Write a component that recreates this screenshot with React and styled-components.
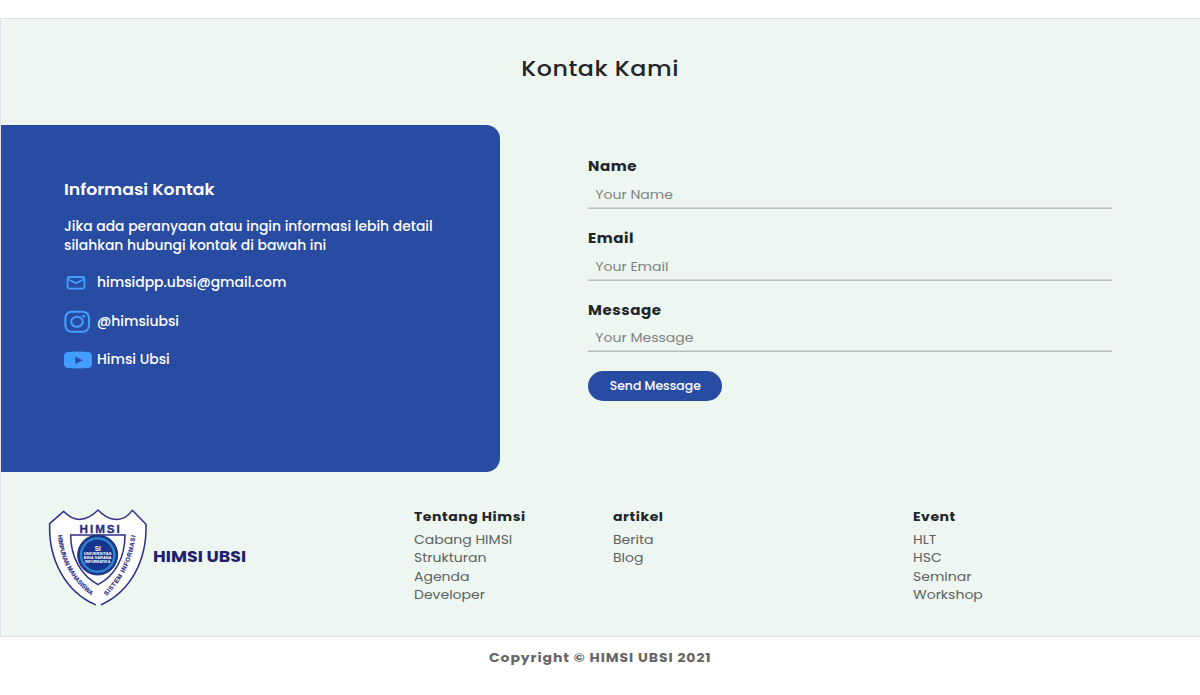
import React from "react";
import styled, { createGlobalStyle } from "styled-components";

const family = 'Poppins, Inter, "Liberation Sans", sans-serif';

const GlobalStyle = createGlobalStyle`
  * { box-sizing: border-box; }
  body {
    margin: 0;
    background: #fff;
    color: #212529;
    font-family: ${family};
    font-feature-settings: "cv11";
  }
`;

/* Widens the letters slightly, as all the copy on this page is set. */
const Wide = styled.span`
  display: inline-block;
  white-space: nowrap;
  transform: scaleX(${(p) => p.$by || 1.078});
  transform-origin: ${(p) => p.$from || "left"} center;
`;

const Page = styled.div`
  padding-top: 18px;
`;

const Section = styled.section`
  height: 619px;
  background: #edf6f1;
  border: 1px solid #dee2e6;
  border-right: 0;
`;

const Title = styled.h2`
  margin: 0 0 6px;
  font-size: 22px;
  font-weight: 500;
  letter-spacing: 0.5px;
  line-height: 100px;
  text-align: center;
`;

const Columns = styled.div`
  display: grid;
  grid-template-columns: 499px 524px;
  column-gap: 88px;
  height: 347px;
`;

const InfoCard = styled.div`
  padding: 53px 0 0 63px;
  border-radius: 0 14px 14px 0;
  background: #294ca3;
  color: #fff;
`;

const InfoTitle = styled.h3`
  margin: 0 0 16px;
  font-size: 16px;
  font-weight: 600;
  line-height: 24px;
`;

const InfoText = styled.p`
  display: flex;
  flex-direction: column;
  align-items: flex-start;
  margin: 0 0 9px;
  font-size: 13.5px;
  font-weight: 500;
  line-height: 18.5px;
`;

const ContactList = styled.ul`
  margin: 0;
  padding: 0;
  list-style: none;
`;

const Contact = styled.li`
  display: flex;
  align-items: center;
  gap: 5px;
  height: 38.6px;
  font-size: 13.5px;
  font-weight: 500;

  svg {
    flex: none;
  }
`;

const Form = styled.form`
  padding-top: 29.4px;
`;

const Field = styled.label`
  display: block;
  height: 71.6px;
`;

const Label = styled.span`
  display: block;
  font-size: 14px;
  font-weight: 700;
  letter-spacing: 0.5px;
  line-height: 24px;
`;

const InputLine = styled.span`
  display: block;
  height: 30.6px;
  border-bottom: 1px solid #bcbebd;
  box-shadow: inset 0 -1px #d3d8d5;
`;

const Input = styled.input`
  display: block;
  width: 486px;
  height: 33.6px;
  padding: 0 0 0 6.8px;
  border: 0;
  outline: 0;
  background: transparent;
  color: #212529;
  font: 400 13px ${family};
  font-feature-settings: "cv11";
  transform: scaleX(1.078);
  transform-origin: left;

  &::placeholder {
    color: #7d827f;
    opacity: 1;
  }
`;

const SendButton = styled.button`
  display: flex;
  align-items: center;
  justify-content: center;
  width: 134px;
  height: 30px;
  margin-top: 1.8px;
  padding: 1px 0 0;
  border: 0;
  border-radius: 17px;
  background: #294ca3;
  color: #fff;
  font: 500 11.5px ${family};
  font-feature-settings: "cv11";
`;

const Footer = styled.footer`
  display: grid;
  grid-template-columns: 413px 199.3px 300px 1fr;
  padding-top: 33px;
`;

const Brand = styled.div`
  display: flex;
  align-items: center;
  height: 105px;
  padding-left: 44px;
  color: #1f1f6b;
  font-size: 16px;
  font-weight: 700;
  line-height: 24px;

  svg {
    flex: none;
    margin-right: 3px;
  }

  span {
    margin-bottom: 2px;
  }
`;

const LinkGroup = styled.div`
  display: flex;
  flex-direction: column;
  align-items: flex-start;
  color: #5d6160;
  font-size: 13px;
  line-height: 18.6px;
`;

const GroupTitle = styled.h4`
  margin: 0 0 1.5px;
  color: #212529;
  font-size: 13px;
  font-weight: 700;
  letter-spacing: 0.5px;
  line-height: 24px;
`;

const Copyright = styled.p`
  margin: 10px 0 0;
  color: #666;
  font-size: 13px;
  font-weight: 700;
  letter-spacing: 0.85px;
  line-height: 22px;
  text-align: center;
`;

const MailIcon = () => (
  <svg width="28" height="24" viewBox="0 0 28 24" fill="none" stroke="#429eff" strokeWidth="1.8" strokeLinejoin="round" strokeLinecap="round">
    <rect x="3.6" y="6" width="16.8" height="11.6" rx="1.8" />
    <path d="M4.2 8.2 12 12.2l7.8-4" />
  </svg>
);

const InstagramIcon = () => (
  <svg width="28" height="24" viewBox="0 0 28 24" fill="none" stroke="#429eff" strokeWidth="2.1">
    <rect x="1.4" y="1.7" width="23.6" height="20" rx="6.2" />
    <ellipse cx="13" cy="11.8" rx="5.8" ry="5" />
    <circle cx="19.6" cy="6.2" r="1.4" fill="#429eff" stroke="none" />
  </svg>
);

const YoutubeIcon = () => (
  <svg width="28" height="24" viewBox="0 0 28 24">
    <path d="M4 4Q14 3 24 4q3.500.3 3.700 3 .6 5.200 0 10.200-.3 2.500-3.700 2.900-10 .9-20 0-3.400-.4-3.700-2.900-.6-5 0-10.200Q.6 4.300 4 4Z" fill="#429eff" />
    <path d="m11.400 8.500 7.200 3.700-7.200 3.700Z" fill="#294ca3" />
  </svg>
);

const Logo = () => (
  <svg width="105" height="105" viewBox="0 0 315 315" fontFamily="Liberation Sans, sans-serif" fontWeight="700" fill="#2b2f86" textAnchor="middle">
    <defs>
      <path id="logo-left" d="M38 91C46 165 74 220 138 271" />
      <path id="logo-right" d="M183 274C239 218 262 164 272 90" />
    </defs>
    <path d="M151 299C62 260 10 164 14 56L56 19Q81 46 107 43 134 41 159 15 184 41 208 43 239 47 262 16L303 58C306 170 254 260 169 299" fill="#fff" stroke="#2b2f86" strokeWidth="4.500" strokeLinejoin="round" strokeLinecap="round" />
    <path d="M77 90H240C240 158 211 211 159 239 107 211 77 155 77 90Z" fill="#fff" stroke="#2b2f86" strokeWidth="4.500" />
    <text x="164" y="83" fontSize="35" textLength="121" stroke="#2b2f86" strokeWidth="1">HIMSI</text>
    <circle cx="158" cy="150" r="60" fill="#1d3a8c" stroke="#232b7d" strokeWidth="3" />
    <circle cx="158" cy="150" r="50" fill="#17358c" stroke="#2e86d3" strokeWidth="7" />
    <g fill="#fff">
      <text x="158" y="137" fontSize="19">SI</text>
      <text x="158" y="151" fontSize="11" textLength="84" lengthAdjust="spacingAndGlyphs">UNIVERSITAS</text>
      <text x="158" y="163" fontSize="9.200" textLength="83" lengthAdjust="spacingAndGlyphs">BINA SARANA</text>
      <text x="158" y="174.500" fontSize="9.200" textLength="76" lengthAdjust="spacingAndGlyphs">INFORMATIKA</text>
    </g>
    <g fontSize="18.500" stroke="#2b2f86" strokeWidth="0.500">
      <text>
        <textPath href="#logo-left" startOffset="50%" textLength="213" lengthAdjust="spacingAndGlyphs">HIMPUNAN MAHASISWA</textPath>
      </text>
      <text>
        <textPath href="#logo-right" startOffset="50%" textLength="205" lengthAdjust="spacing">SISTEM INFORMASI</textPath>
      </text>
    </g>
  </svg>
);

const fields = [
  { label: "Name", hint: "Your Name" },
  { label: "Email", hint: "Your Email" },
  { label: "Message", hint: "Your Message" },
];

const contacts = [
  { Icon: MailIcon, text: "himsidpp.ubsi@gmail.com" },
  { Icon: InstagramIcon, text: "@himsiubsi" },
  { Icon: YoutubeIcon, text: "Himsi Ubsi" },
];

const groups = [
  { title: "Tentang Himsi", links: ["Cabang HIMSI", "Strukturan", "Agenda", "Developer"] },
  { title: "artikel", links: ["Berita", "Blog"] },
  { title: "Event", links: ["HLT", "HSC", "Seminar", "Workshop"] },
];

export default function App() {
  return (
    <Page>
      <GlobalStyle />
      <Section>
        <Title>
          <Wide $from="center">Kontak Kami</Wide>
        </Title>
        <Columns>
          <InfoCard>
            <InfoTitle>
              <Wide>Informasi Kontak</Wide>
            </InfoTitle>
            <InfoText>
              <Wide $by={1.03}>Jika ada peranyaan atau ingin informasi lebih detail</Wide>
              <Wide $by={1.03}>silahkan hubungi kontak di bawah ini</Wide>
            </InfoText>
            <ContactList>
              {contacts.map(({ Icon, text }) => (
                <Contact key={text}>
                  <Icon />
                  <Wide $by={1.03}>{text}</Wide>
                </Contact>
              ))}
            </ContactList>
          </InfoCard>
          <Form onSubmit={(e) => e.preventDefault()}>
            {fields.map((f) => (
              <Field key={f.label}>
                <Label>
                  <Wide>{f.label}</Wide>
                </Label>
                <InputLine>
                  <Input placeholder={f.hint} />
                </InputLine>
              </Field>
            ))}
            <SendButton>
              <Wide $from="center">Send Message</Wide>
            </SendButton>
          </Form>
        </Columns>
        <Footer>
          <Brand>
            <Logo />
            <Wide $by={1.09}>HIMSI UBSI</Wide>
          </Brand>
          {groups.map((g) => (
            <LinkGroup key={g.title}>
              <GroupTitle>
                <Wide>{g.title}</Wide>
              </GroupTitle>
              {g.links.map((name) => (
                <Wide key={name}>{name}</Wide>
              ))}
            </LinkGroup>
          ))}
        </Footer>
      </Section>
      <Copyright>
        <Wide $from="center">Copyright © HIMSI UBSI 2021</Wide>
      </Copyright>
    </Page>
  );
}
